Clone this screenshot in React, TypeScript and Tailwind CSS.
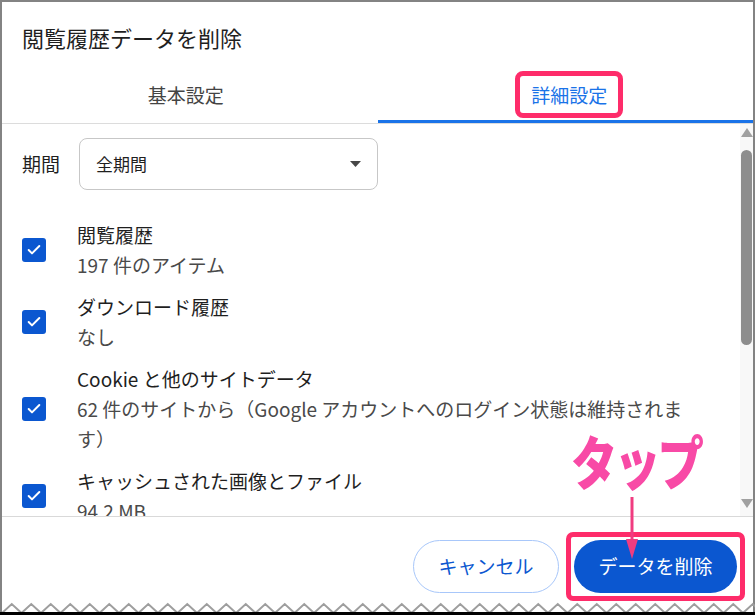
import { Check } from 'lucide-react'

type Item = {
  title: string
  lines: string[]
}

const items: Item[] = [
  { title: '閲覧履歴', lines: ['197 件のアイテム'] },
  { title: 'ダウンロード履歴', lines: ['なし'] },
  {
    title: 'Cookie と他のサイトデータ',
    lines: ['62 件のサイトから（Google アカウントへのログイン状態は維持されま', 'す）'],
  },
  { title: 'キャッシュされた画像とファイル', lines: ['94.2 MB'] },
]

function ScrollBar() {
  return (
    <div className="w-[13px] shrink-0 bg-[#f8f8f8] flex flex-col items-center pt-[4px] pb-[8px]">
      <svg width="12" height="9" viewBox="0 0 12 9">
        <path d="M6 0 L12 9 L0 9 Z" fill="#a0a0a0" />
      </svg>
      <div className="mt-[13px] w-[11px] h-[195px] rounded-full bg-[#8d8d8d]" />
      <div className="flex-1" />
      <svg width="12" height="9" viewBox="0 0 12 9">
        <path d="M0 0 L12 0 L6 9 Z" fill="#a0a0a0" />
      </svg>
    </div>
  )
}

function CheckRow({ item }: { item: Item }) {
  return (
    <div className="flex items-center py-[6px]">
      <div className="w-[24px] h-[24px] rounded-[3px] bg-[#0b57d0] flex items-center justify-center shrink-0">
        <Check size={16} strokeWidth={3} color="white" />
      </div>
      <div className="ml-[31px] text-[19px] leading-[30px]">
        <div className="text-[#1f1f1f]">{item.title}</div>
        {item.lines.map((l) => (
          <div key={l} className="text-[#4a4a4a] whitespace-nowrap">
            {l}
          </div>
        ))}
      </div>
    </div>
  )
}

export default function App() {
  return (
    <div className="relative w-[755px] h-[615px] bg-white overflow-hidden font-['Noto_Sans_CJK_JP','Noto_Sans',sans-serif]">
      <div className="h-full flex flex-col border-t-2 border-x-2 border-[#838383]">
        {/* Title */}
        <div className="px-[20px] pt-[19px] h-[65px] text-[22px] leading-[32px] text-[#1f1f1f]">
          閲覧履歴データを削除
        </div>

        {/* Tabs */}
        <div className="flex border-b border-[#dcdcdc]">
          <div className="flex-1 h-[56px] flex items-center justify-center text-[19px] text-[#444] pr-[8px]">
            基本設定
          </div>
          <div className="flex-1 h-[56px] flex items-center justify-center border-b-[3px] border-[#1a73e8] pl-[8px] pt-[1px]">
            <span className="border-[5px] border-[#fe2c6a] rounded-[8px] px-[11px] py-[4px] text-[19px] leading-[29px] text-[#1a73e8]">
              詳細設定
            </span>
          </div>
        </div>

        {/* Scroll area */}
        <div className="flex h-[393px] border-b border-[#d9d9d9]">
          <div className="flex-1 overflow-hidden pl-[20px] pt-[14px]">
            <div className="flex items-center">
              <span className="text-[19px] text-[#1f1f1f] w-[38px]">期間</span>
              <div className="ml-[19px] w-[299px] h-[52px] rounded-[8px] border border-[#c7c7c7] flex items-center justify-between pl-[16px] pr-[16px]">
                <span className="text-[17px] text-[#1f1f1f]">全期間</span>
                <svg width="11" height="6" viewBox="0 0 11 6">
                  <path d="M0 0 L11 0 L5.5 6 Z" fill="#474747" />
                </svg>
              </div>
            </div>
            <div className="mt-[24px] flex flex-col">
              {items.map((it) => (
                <CheckRow key={it.title} item={it} />
              ))}
            </div>
          </div>
          <ScrollBar />
        </div>

        {/* Footer */}
        <div className="h-[85px] flex items-start justify-end pt-[15px] pr-[8px]">
          <button className="mt-[8px] w-[146px] h-[53px] rounded-full border border-[#a8c7fa] text-[19px] text-[#0b57d0]">
            キャンセル
          </button>
          <span className="ml-[7px] border-[5px] border-[#fe2c6a] rounded-[7px] p-[3px] flex">
            <button className="w-[163px] h-[53px] rounded-full bg-[#0b57d0] text-[19px] text-white">
              データを削除
            </button>
          </span>
        </div>

        {/* torn bottom edge */}
        <div className="flex-1 relative">
          <svg className="absolute left-0 top-0" width="755" height="12" viewBox="0 0 755 12">
            <polyline
              points={Array.from({ length: 40 }, (_, i) => `${i * 19.5},11 ${i * 19.5 + 9.75},2`).join(' ')}
              fill="none"
              stroke="#9e9e9e"
              strokeWidth="2"
            />
          </svg>
        </div>
      </div>
      <div className="absolute left-0 bottom-0 w-full h-[3px] bg-black" />

      {/* annotation */}
      <div className="absolute left-[571px] top-[431px] origin-left scale-x-[0.8] text-[58px] leading-none font-black text-[#f84aa6] tracking-[-4px]">
        タップ
      </div>
      <svg className="absolute left-[624px] top-[497px]" width="16" height="62" viewBox="0 0 16 62">
        <line x1="8" y1="0" x2="8" y2="46" stroke="#f03c80" strokeWidth="3" />
        <path d="M2 42 L14 42 L8 62 Z" fill="#f03c80" />
      </svg>
    </div>
  )
}
